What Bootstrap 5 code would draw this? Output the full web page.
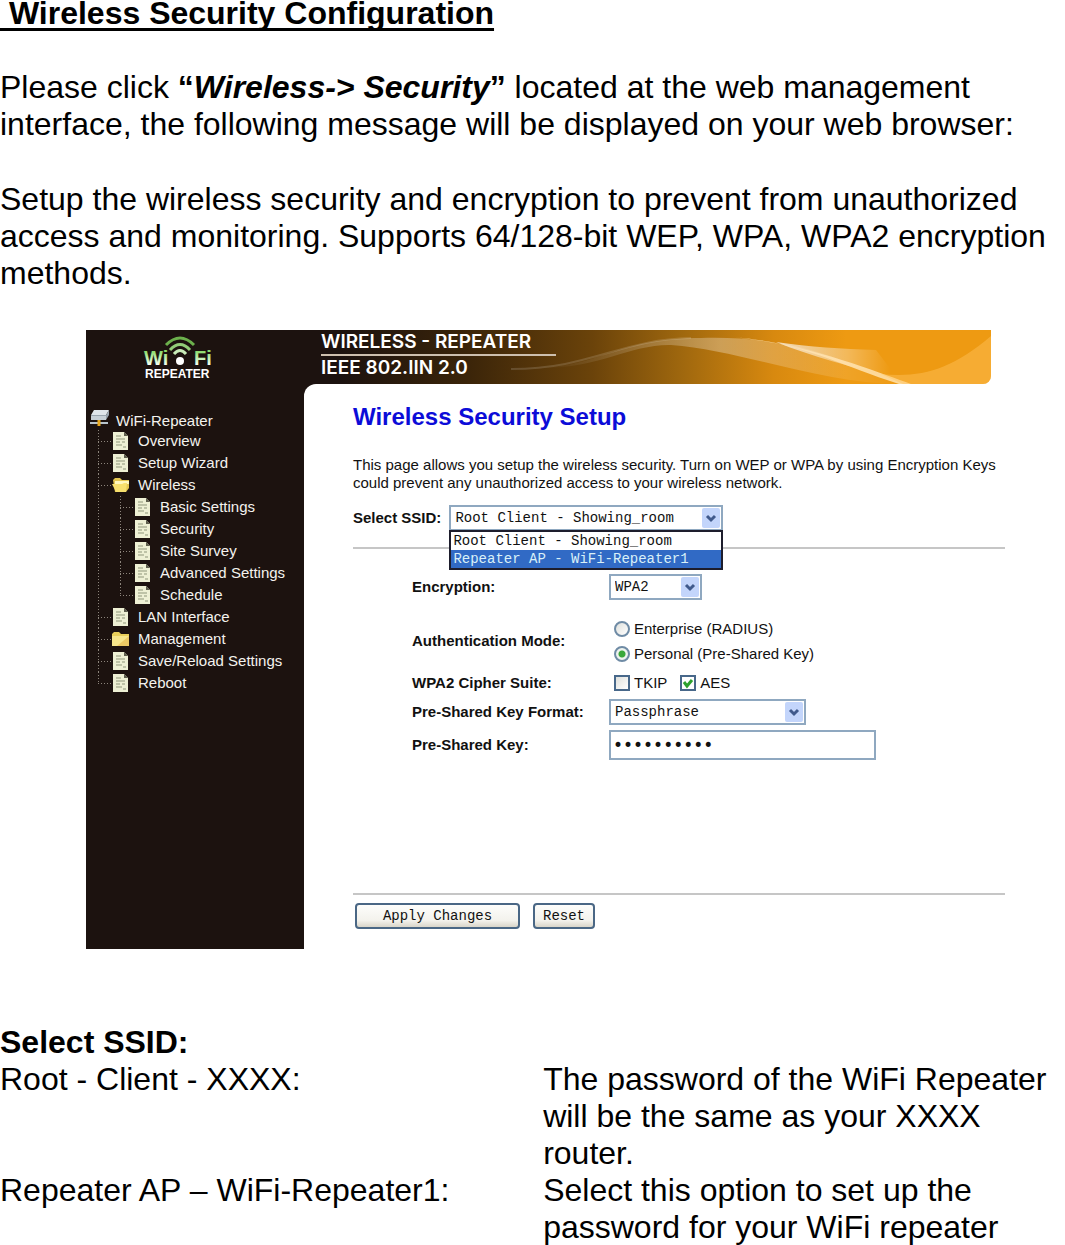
<!DOCTYPE html>
<html lang="en">
<head>
<meta charset="utf-8">
<meta name="viewport" content="width=device-width, initial-scale=1">
<title>Wireless Security Configuration</title>
<link rel="stylesheet" href="https://cdn.jsdelivr.net/npm/bootstrap@5.3.0/dist/css/bootstrap.min.css">
<style>
  body { font-family: "Liberation Sans", Arial, sans-serif; font-size: 32px; line-height: 37px; color: #000; background: #fff; }
  .doc-title { font-size: 32px; line-height: 26px; font-weight: 700; margin-bottom: 43px; text-decoration: underline; text-decoration-thickness: 3px; text-underline-offset: 4px; text-decoration-skip-ink: none; }
  .doc-sub { font-size: 32px; line-height: 38px; font-weight: 700; }
  .doc-text { margin-bottom: 38px; }
  .doc-terms dt, .doc-terms dd { font-weight: 400; margin: 0; }
  .term-name { flex: 0 0 51%; }

  .shot { margin: 0 60px 74px 86px; font-size: 15px; line-height: 18px; background: #1c120f; }
  .banner-wrap { background: linear-gradient(90deg, #1c120f 50%, #fff 50%); }
  .banner-area { height: 54px; margin-right: 14px; border-bottom-right-radius: 8px; position: relative; overflow: hidden;
    background: linear-gradient(90deg, #1c120f 0, #1c120f 28%, #3a2409 42%, #6b430a 56%, #a0680e 66%, #d8890f 76%, #ee9a12 84%); }
  .banner-wave { position: absolute; right: 0; top: 0; width: 480px; height: 54px; }
  .side-logo { width: 218px; padding-left: 56px; }
  .banner-name { color: #fff; font-family: Inter, sans-serif; font-weight: 600; font-size: 19px; line-height: 24px; padding-left: 17px; position: relative; }
  .banner-name .top-line { border-bottom: 2px solid #cdbfae; padding-right: 25px; }

  .side-tree { flex: 0 0 218px; color: #f4f2ee; padding: 26px 0 0 4px; }
  .side-tree ul { list-style: none; margin: 0; padding: 0; }
  .tree-root { height: 20px; line-height: 22px; display: flex; }
  .tree-root svg { margin-right: 6px; flex: none; }
  .side-tree .tree-1 { margin-left: 8px; }
  .tree-1 li { padding-left: 14px;
    background: repeating-linear-gradient(180deg, #8d857c 0 1px, transparent 1px 3px) 0 0 / 1px 100% no-repeat,
                repeating-linear-gradient(90deg, #8d857c 0 1px, transparent 1px 3px) 0 11px / 13px 1px no-repeat; }
  .tree-1 li:last-child { background-size: 1px 12px, 13px 1px; }
  .side-tree .tree-2 { margin-left: 8px; }
  .side-tree a { display: flex; align-items: center; height: 22px; color: inherit; text-decoration: none; }
  .side-tree a svg { flex: none; margin-right: 9px; }

  .panel { background: #fff; border-top-left-radius: 12px; padding: 17px 0 20px 49px; color: #111; min-width: 0; }
  .panel-title { font-size: 24px; line-height: 32px; font-weight: 700; color: #0c0cd8; margin-bottom: 23px; }
  .panel-note { margin-bottom: 13px; }
  .rule { border-top: 2px solid #c6c6c6; }
  .label-b { font-weight: 700; }
  .xp, .drop-list { font-family: "Liberation Mono", "Courier New", monospace; font-size: 14px; color: #111; }
  .xp { border: 2px solid #8fa8c0; border-radius: 0; background-color: #fff; padding: 0 4px; height: 26px; line-height: 20px; }
  select.xp { appearance: none; display: block;
    background-image: url("data:image/svg+xml,%3Csvg xmlns='http://www.w3.org/2000/svg' width='18' height='20'%3E%3Crect width='18' height='20' rx='2' fill='%23c3d5fb'/%3E%3Cpath d='M5 8l4 4L13 8' fill='none' stroke='%23405a8c' stroke-width='3'/%3E%3C/svg%3E");
    background-repeat: no-repeat; background-position: right 1px center; }
  .w-enc { width: 93px; }
  .w-format { width: 197px; }
  input.w-key { width: 267px; height: 30px; padding: 0 2px; font-family: "DejaVu Sans", sans-serif; font-size: 17px; }
  .ssid-box { position: relative; width: 274px; margin-left: 8px; }
  .drop-list { position: absolute; left: 0; right: 0; top: 25px; z-index: 2; border: 2px solid #1d1d2c; background: #fff; list-style: none; margin: 0; padding: 0; }
  .drop-list li { height: 18px; padding-left: 2px; }
  .drop-list .picked { background: #316ac5; color: #d9f0f8; }
  .form-area { padding: 25px 0 133px 59px; }
  .form-line { display: flex; align-items: center; }
  .line-format { margin-bottom: 5px; }
  .form-name { flex: 0 0 197px; font-weight: 700; }
  .pick { display: flex; align-items: center; height: 25px; padding-left: 5px; }
  .pick input { appearance: none; width: 16px; height: 16px; margin: 0 4px 0 0; border: 2px solid #48688a; background: linear-gradient(135deg, #dfe0dc, #fff); flex: none; }
  .pick input[type=radio] { border-radius: 50%; border-color: #6f8ba5; }
  .pick input[type=radio]:checked { background: radial-gradient(circle, #3aa83a 0 3px, #eef3ee 4px); }
  .pick input[type=checkbox]:checked { background: #fff url("data:image/svg+xml,%3Csvg xmlns='http://www.w3.org/2000/svg' width='12' height='12'%3E%3Cpath d='M2 5l3 4 5-6' fill='none' stroke='%232ea22e' stroke-width='3'/%3E%3C/svg%3E") center no-repeat; }
  .btn-line { display: flex; gap: 13px; padding: 8px 0 0 2px; }
  .xp-btn { font-family: "Liberation Mono", "Courier New", monospace; font-size: 14px; line-height: 20px; color: #111; width: 62px; height: 26px; padding: 0; border: 2px solid #4a6785; border-radius: 4px; background: linear-gradient(#fdfdfb, #f3f2ec 70%, #d9d5c9); }
  .xp-btn.wide { width: 165px; }
</style>
</head>
<body>
<svg width="0" height="0" class="d-none" aria-hidden="true">
  <symbol id="page" viewBox="0 0 17 20"><path d="M1 1h11l4 4v14H1z" fill="#eef0d4"/><path d="M12 1v4h4z" fill="#5d5d4c"/><path d="M4 5h5M4 8h9M4 11h4M10 11h3M4 14h6M11 16h3" stroke="#8f967a" stroke-width="1"/></symbol>
  <symbol id="folder" viewBox="0 0 17 20"><path d="M0 5l2-2h5l2 2h8v12H0z" fill="#e9cf5a"/><path d="M0 7h17v10H0z" fill="#f7e68b"/><path d="M17 7v10H5z" fill="#ecc964"/></symbol>
  <symbol id="folder-open" viewBox="0 0 17 20"><path d="M1 5l2-2h5l2 2h7v8l-3 4H3z" fill="#e3c650"/><path d="M3 6h14v3H3z" fill="#fff7bd"/><path d="M0 9h10l2-1h3l-1 9H4z" fill="#f7e06e"/></symbol>
</svg>

<h1 class="doc-title"><span>&nbsp;Wireless Security Configuration</span></h1>
<p class="doc-text">Please click <strong>“<em>Wireless-&gt; Security</em>”</strong> located at the web management<br>interface, the following message will be displayed on your web browser:</p>
<p class="doc-text">Setup the wireless security and encryption to prevent from unauthorized<br>access and monitoring. Supports 64/128-bit WEP, WPA, WPA2 encryption<br>methods.</p>

<section class="shot">
  <div class="banner-wrap">
    <header class="banner-area d-flex">
      <svg class="banner-wave" viewBox="0 0 480 54" preserveAspectRatio="none" aria-hidden="true">
        <defs>
          <linearGradient id="w1" x1="0" x2="1"><stop offset="0" stop-color="#fff" stop-opacity="0"/><stop offset=".5" stop-color="#fff" stop-opacity=".3"/><stop offset="1" stop-color="#fff" stop-opacity="0"/></linearGradient>
          <linearGradient id="w2" x1="0" x2="1"><stop offset="0" stop-color="#fff" stop-opacity=".7"/><stop offset=".6" stop-color="#fff" stop-opacity=".3"/><stop offset=".95" stop-color="#fff" stop-opacity="0"/></linearGradient>
        </defs>
        <path d="M30 38C90 35 110 8 190 8C250 6 300 18 330 30L390 54C310 54 230 20 160 15C120 14 90 38 30 38z" fill="url(#w1)"/>
        <path d="M265 12C300 17 330 19 365 20L385 46C340 38 300 26 265 12z" fill="url(#w2)"/>
        <path d="M220 7C290 12 320 32 388 54H400C370 44 300 14 220 7z" fill="#ffe3b0" opacity=".85"/>
        <path d="M370 44C410 48 440 40 480 6V54H392z" fill="#ffc45e" opacity=".45"/>
        <path d="M0 39C80 39 110 9 180 8" fill="none" stroke="#fff" stroke-opacity=".15" stroke-width="2"/>
      </svg>
      <div class="side-logo">
        <svg width="74" height="54" viewBox="0 0 74 54" role="img" aria-label="WiFi Repeater">
          <defs><linearGradient id="lg" x1="0" y1="0" x2="0" y2="1"><stop offset=".2" stop-color="#8ddc6c"/><stop offset=".8" stop-color="#f4fff0"/></linearGradient></defs>
          <g font-family="Liberation Sans, Arial, sans-serif" font-weight="700">
            <text x="2" y="35" font-size="20" fill="url(#lg)">Wi</text>
            <text x="52" y="35" font-size="20" fill="url(#lg)">Fi</text>
            <text x="3" y="48" font-size="12" fill="#fff">REPEATER</text>
          </g>
          <g fill="none">
            <path d="M24 15Q38 1 52 15" stroke="#6cb04c" stroke-width="3"/>
            <path d="M28 20Q38 9 48 20" stroke="#92cc78" stroke-width="3"/>
            <path d="M32 24Q38 17 44 24" stroke="#c8ecb8" stroke-width="3"/>
          </g>
          <circle cx="38" cy="31" r="4" fill="#fff"/>
        </svg>
      </div>
      <div class="banner-name"><div class="top-line">WIRELESS - REPEATER</div><div>IEEE 802.IIN 2.0</div></div>
    </header>
  </div>

  <div class="d-flex align-items-stretch">
    <nav class="side-tree" aria-label="Device menu">
      <div class="tree-root"><svg width="20" height="18" viewBox="0 0 20 18" aria-hidden="true"><path d="M4 0h15l-3 5H1z" fill="#dfe5ea"/><path d="M1 5h15l3-5v5l-3 5H1z" fill="#9aa5af"/><path d="M1 6h15v4H1z" fill="#c6cfd6"/><path d="M0 13h18" stroke="#b8c4cc" stroke-width="2"/><path d="M9 10v6" stroke="#e8a820" stroke-width="3"/></svg><span>WiFi-Repeater</span></div>
      <ul class="tree-1">
        <li><a href="#"><svg width="17" height="20"><use href="#page"/></svg>Overview</a></li>
        <li><a href="#"><svg width="17" height="20"><use href="#page"/></svg>Setup Wizard</a></li>
        <li><a href="#"><svg width="17" height="20"><use href="#folder-open"/></svg>Wireless</a>
          <ul class="tree-2">
            <li><a href="#"><svg width="17" height="20"><use href="#page"/></svg>Basic Settings</a></li>
            <li><a href="#"><svg width="17" height="20"><use href="#page"/></svg>Security</a></li>
            <li><a href="#"><svg width="17" height="20"><use href="#page"/></svg>Site Survey</a></li>
            <li><a href="#"><svg width="17" height="20"><use href="#page"/></svg>Advanced Settings</a></li>
            <li><a href="#"><svg width="17" height="20"><use href="#page"/></svg>Schedule</a></li>
          </ul>
        </li>
        <li><a href="#"><svg width="17" height="20"><use href="#page"/></svg>LAN Interface</a></li>
        <li><a href="#"><svg width="17" height="20"><use href="#folder"/></svg>Management</a></li>
        <li><a href="#"><svg width="17" height="20"><use href="#page"/></svg>Save/Reload Settings</a></li>
        <li><a href="#"><svg width="17" height="20"><use href="#page"/></svg>Reboot</a></li>
      </ul>
    </nav>

    <main class="panel flex-grow-1">
      <h2 class="panel-title">Wireless Security Setup</h2>
      <p class="panel-note">This page allows you setup the wireless security. Turn on WEP or WPA by using Encryption Keys could prevent any unauthorized access to your wireless network.</p>
      <form>
        <div class="d-flex align-items-center">
          <label class="label-b" for="ssid">Select SSID:</label>
          <div class="ssid-box">
            <select id="ssid" class="xp w-100"><option>Root Client - Showing_room</option><option>Repeater AP - WiFi-Repeater1</option></select>
            <ul class="drop-list"><li>Root Client - Showing_room</li><li class="picked">Repeater AP - WiFi-Repeater1</li></ul>
          </div>
        </div>
        <div class="rule mt-3"></div>
        <div class="form-area">
          <div class="form-line mb-3"><label class="form-name" for="enc">Encryption:</label><select id="enc" class="xp w-enc"><option>WPA2</option></select></div>
          <div class="form-line mb-1" role="radiogroup" aria-labelledby="auth"><span class="form-name" id="auth">Authentication Mode:</span>
            <div><label class="pick"><input type="radio" name="auth">Enterprise (RADIUS)</label><label class="pick"><input type="radio" name="auth" checked>Personal (Pre-Shared Key)</label></div></div>
          <div class="form-line mb-1" role="group" aria-labelledby="suite"><span class="form-name" id="suite">WPA2 Cipher Suite:</span>
            <label class="pick"><input type="checkbox">TKIP</label><label class="pick ms-2"><input type="checkbox" checked>AES</label></div>
          <div class="form-line line-format"><label class="form-name" for="fmt">Pre-Shared Key Format:</label><select id="fmt" class="xp w-format"><option>Passphrase</option></select></div>
          <div class="form-line"><label class="form-name" for="psk">Pre-Shared Key:</label><input id="psk" type="password" class="xp w-key" value="repeater12"></div>
        </div>
        <div class="rule"></div>
        <div class="btn-line"><button type="button" class="xp-btn wide">Apply Changes</button><button type="reset" class="xp-btn">Reset</button></div>
      </form>
    </main>
  </div>
</section>

<h2 class="doc-sub m-0">Select SSID:</h2>
<dl class="doc-terms m-0">
  <div class="d-flex"><dt class="term-name">Root - Client - XXXX:</dt><dd>The password of the WiFi Repeater<br>will be the same as your XXXX<br>router.</dd></div>
  <div class="d-flex"><dt class="term-name">Repeater AP – WiFi-Repeater1:</dt><dd>Select this option to set up the<br>password for your WiFi repeater</dd></div>
</dl>
<script src="https://cdn.jsdelivr.net/npm/bootstrap@5.3.0/dist/js/bootstrap.bundle.min.js"></script>
</body>
</html>
